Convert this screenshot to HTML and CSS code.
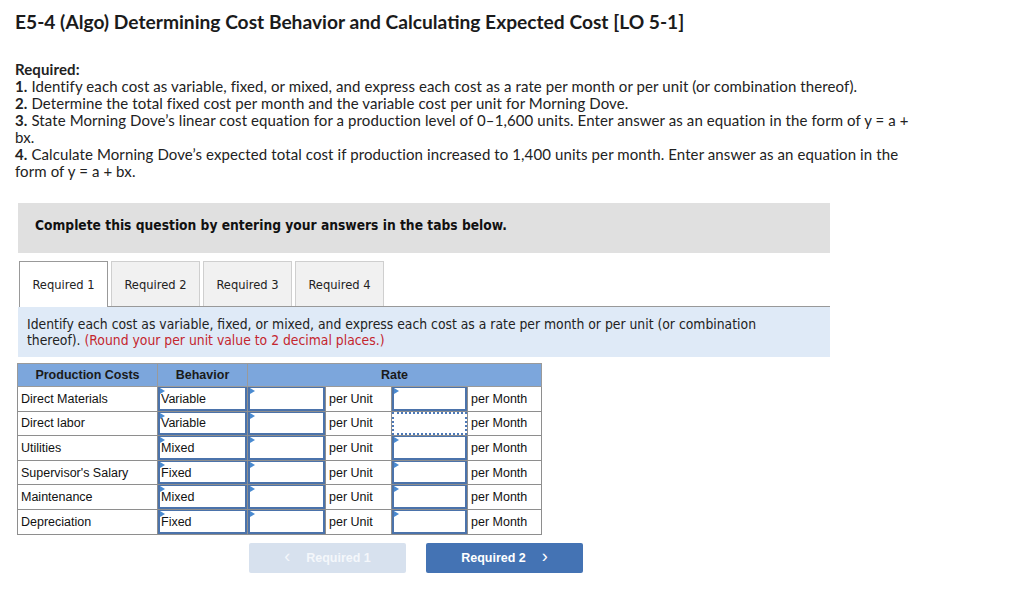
FILE: index.html
```html
<!DOCTYPE html>
<html>
<head>
<meta charset="utf-8">
<link rel="stylesheet" href="styles.css">
</head>
<body>
<div class="page">
  <h1 class="title">E5-4 (Algo) Determining Cost Behavior and Calculating Expected Cost [LO 5-1]</h1>
  <div class="reqs">
    <p class="req-head">Required:</p>
    <p><b>1.</b> Identify each cost as variable, fixed, or mixed, and express each cost as a rate per month or per unit (or combination thereof).</p>
    <p><b>2.</b> Determine the total fixed cost per month and the variable cost per unit for Morning Dove.</p>
    <p><b>3.</b> State Morning Dove’s linear cost equation for a production level of 0–1,600 units. Enter answer as an equation in the form of y = a + bx.</p>
    <p><b>4.</b> Calculate Morning Dove’s expected total cost if production increased to 1,400 units per month. Enter answer as an equation in the form of y = a + bx.</p>
  </div>

  <div class="work">
    <div class="complete">Complete this question by entering your answers in the tabs below.</div>

    <div class="tabs">
      <div class="tab active">Required 1</div>
      <div class="tab">Required 2</div>
      <div class="tab">Required 3</div>
      <div class="tab">Required 4</div>
    </div>

    <div class="instr">Identify each cost as variable, fixed, or mixed, and express each cost as a rate per month or per unit (or combination thereof). <span class="red">(Round your per unit value to 2 decimal places.)</span></div>

    <table class="grid">
      <colgroup>
        <col class="c1"><col class="c2"><col class="c3"><col class="c4"><col class="c5"><col class="c6">
      </colgroup>
      <thead>
        <tr><th>Production Costs</th><th>Behavior</th><th colspan="4">Rate</th></tr>
      </thead>
      <tbody>
        <tr><td class="lbl">Direct Materials</td><td class="in"><div class="box"><span class="flag"></span>Variable</div></td><td class="in"><div class="box"><span class="flag"></span></div></td><td class="lbl">per Unit</td><td class="in"><div class="box"><span class="flag"></span></div></td><td class="lbl">per Month</td></tr>
        <tr><td class="lbl">Direct labor</td><td class="in"><div class="box"><span class="flag"></span>Variable</div></td><td class="in"><div class="box"><span class="flag"></span></div></td><td class="lbl">per Unit</td><td class="in"><div class="box dotted"></div></td><td class="lbl">per Month</td></tr>
        <tr><td class="lbl">Utilities</td><td class="in"><div class="box"><span class="flag"></span>Mixed</div></td><td class="in"><div class="box"><span class="flag"></span></div></td><td class="lbl">per Unit</td><td class="in"><div class="box"><span class="flag"></span></div></td><td class="lbl">per Month</td></tr>
        <tr><td class="lbl">Supervisor's Salary</td><td class="in"><div class="box"><span class="flag"></span>Fixed</div></td><td class="in"><div class="box"><span class="flag"></span></div></td><td class="lbl">per Unit</td><td class="in"><div class="box"><span class="flag"></span></div></td><td class="lbl">per Month</td></tr>
        <tr><td class="lbl">Maintenance</td><td class="in"><div class="box"><span class="flag"></span>Mixed</div></td><td class="in"><div class="box"><span class="flag"></span></div></td><td class="lbl">per Unit</td><td class="in"><div class="box"><span class="flag"></span></div></td><td class="lbl">per Month</td></tr>
        <tr><td class="lbl">Depreciation</td><td class="in"><div class="box"><span class="flag"></span>Fixed</div></td><td class="in"><div class="box"><span class="flag"></span></div></td><td class="lbl">per Unit</td><td class="in"><div class="box"><span class="flag"></span></div></td><td class="lbl">per Month</td></tr>
      </tbody>
    </table>

    <div class="nav">
      <div class="btn prev"><span class="chev">&lsaquo;</span>Required 1</div>
      <div class="btn next">Required 2<span class="chev">&rsaquo;</span></div>
    </div>
  </div>
</div>
</body>
</html>
```

FILE: styles.css
```css
html, body {
  margin: 0;
  padding: 0;
  background: #fff;
}
.page {
  padding: 10px 15px 0 15px;
  font-family: Lato, "Open Sans", sans-serif;
  color: #222;
}
.title {
  margin: 0;
  font-size: 19.2px;
  font-weight: 700;
  line-height: 23px;
  color: #1b1b1b;
}
.reqs {
  margin-top: 28px;
  width: 895px;
  font-size: 15px;
  letter-spacing: 0.1px;
  line-height: 17px;
  color: #222;
}
.reqs p {
  margin: 0;
}
.reqs b, .req-head {
  font-weight: 700;
}
.work {
  margin-top: 23px;
  margin-left: 3px;
  width: 812px;
}
.complete {
  background: #e0e0e0;
  height: 50px;
  box-sizing: border-box;
  padding: 14px 0 0 17px;
  font-family: "DejaVu Sans Condensed", "DejaVu Sans", sans-serif;
  font-stretch: condensed;
  font-weight: 700;
  font-size: 13.7px;
  color: #111;
}
.tabs {
  display: flex;
  gap: 3px;
  margin-top: 8px;
  margin-left: 1px;
  border-bottom: 1px solid #999;
  height: 45px;
}
.tab {
  box-sizing: border-box;
  width: 89px;
  height: 45px;
  border: 1px solid #cfcfcf;
  border-bottom: none;
  background: #f1f1f1;
  display: flex;
  align-items: center;
  justify-content: center;
  font-family: "DejaVu Sans Condensed", "DejaVu Sans", sans-serif;
  font-stretch: condensed;
  font-size: 12.8px;
  color: #222;
}
.tab.active {
  background: #fff;
  border-color: #999;
  height: 46px;
  position: relative;
  z-index: 1;
}
.instr {
  background: #dfeaf7;
  height: 50px;
  box-sizing: border-box;
  padding: 9px 40px 0 9px;
  font-family: "DejaVu Sans Condensed", "DejaVu Sans", sans-serif;
  font-stretch: condensed;
  font-size: 13.8px;
  line-height: 16px;
  color: #222;
}
.red {
  color: #c4262e;
}
.grid {
  margin-top: 6px;
  margin-left: -1px;
  border-collapse: collapse;
  table-layout: fixed;
  width: 524px;
  font-family: "Liberation Sans", Arial, sans-serif;
  font-size: 12.5px;
  color: #111;
}
.c1 { width: 140px; }
.c2 { width: 90px; }
.c3 { width: 78px; }
.c4 { width: 66px; }
.c5 { width: 76px; }
.c6 { width: 74px; }
.grid th {
  background: #7ca6dc;
  border: 1px solid #9a9a9a;
  height: 22px;
  padding: 0;
  font-weight: 700;
  color: #1a1a1a;
}
.grid td {
  border: 1px solid #8e8e8e;
  height: 23.6px;
  padding: 0;
}
.grid td.lbl {
  padding-left: 3px;
}
.grid td.in {
  padding: 0;
}
.box {
  position: relative;
  box-sizing: border-box;
  height: 23.6px;
  border: 2px solid #4b73ab;
  border-top-width: 1px;
  display: flex;
  align-items: center;
  padding-left: 1px;
  padding-top: 1px;
}
.box.dotted {
  border: 2px dotted #4b78b8;
}
.flag {
  position: absolute;
  left: 0;
  top: 0;
  width: 0;
  height: 0;
  border-left: 5px solid #4a8ad0;
  border-top: 3px solid transparent;
  border-bottom: 3px solid transparent;
}
.nav {
  display: flex;
  gap: 20px;
  margin-top: 8px;
  margin-left: 231px;
}
.btn {
  box-sizing: border-box;
  width: 157px;
  height: 30px;
  border-radius: 2px;
  display: flex;
  align-items: center;
  justify-content: center;
  font-family: "Liberation Sans", Arial, sans-serif;
  font-weight: 700;
  font-size: 12.5px;
  color: #fff;
}
.btn.prev {
  background: #d7e1ee;
  color: #f4f7fb;
}
.btn.next {
  background: #4473b4;
}
.chev {
  font-size: 18px;
  font-weight: 400;
  line-height: 1;
  margin-top: -3px;
}
.prev .chev { margin-right: 16px; }
.next .chev { margin-left: 16px; }
```
